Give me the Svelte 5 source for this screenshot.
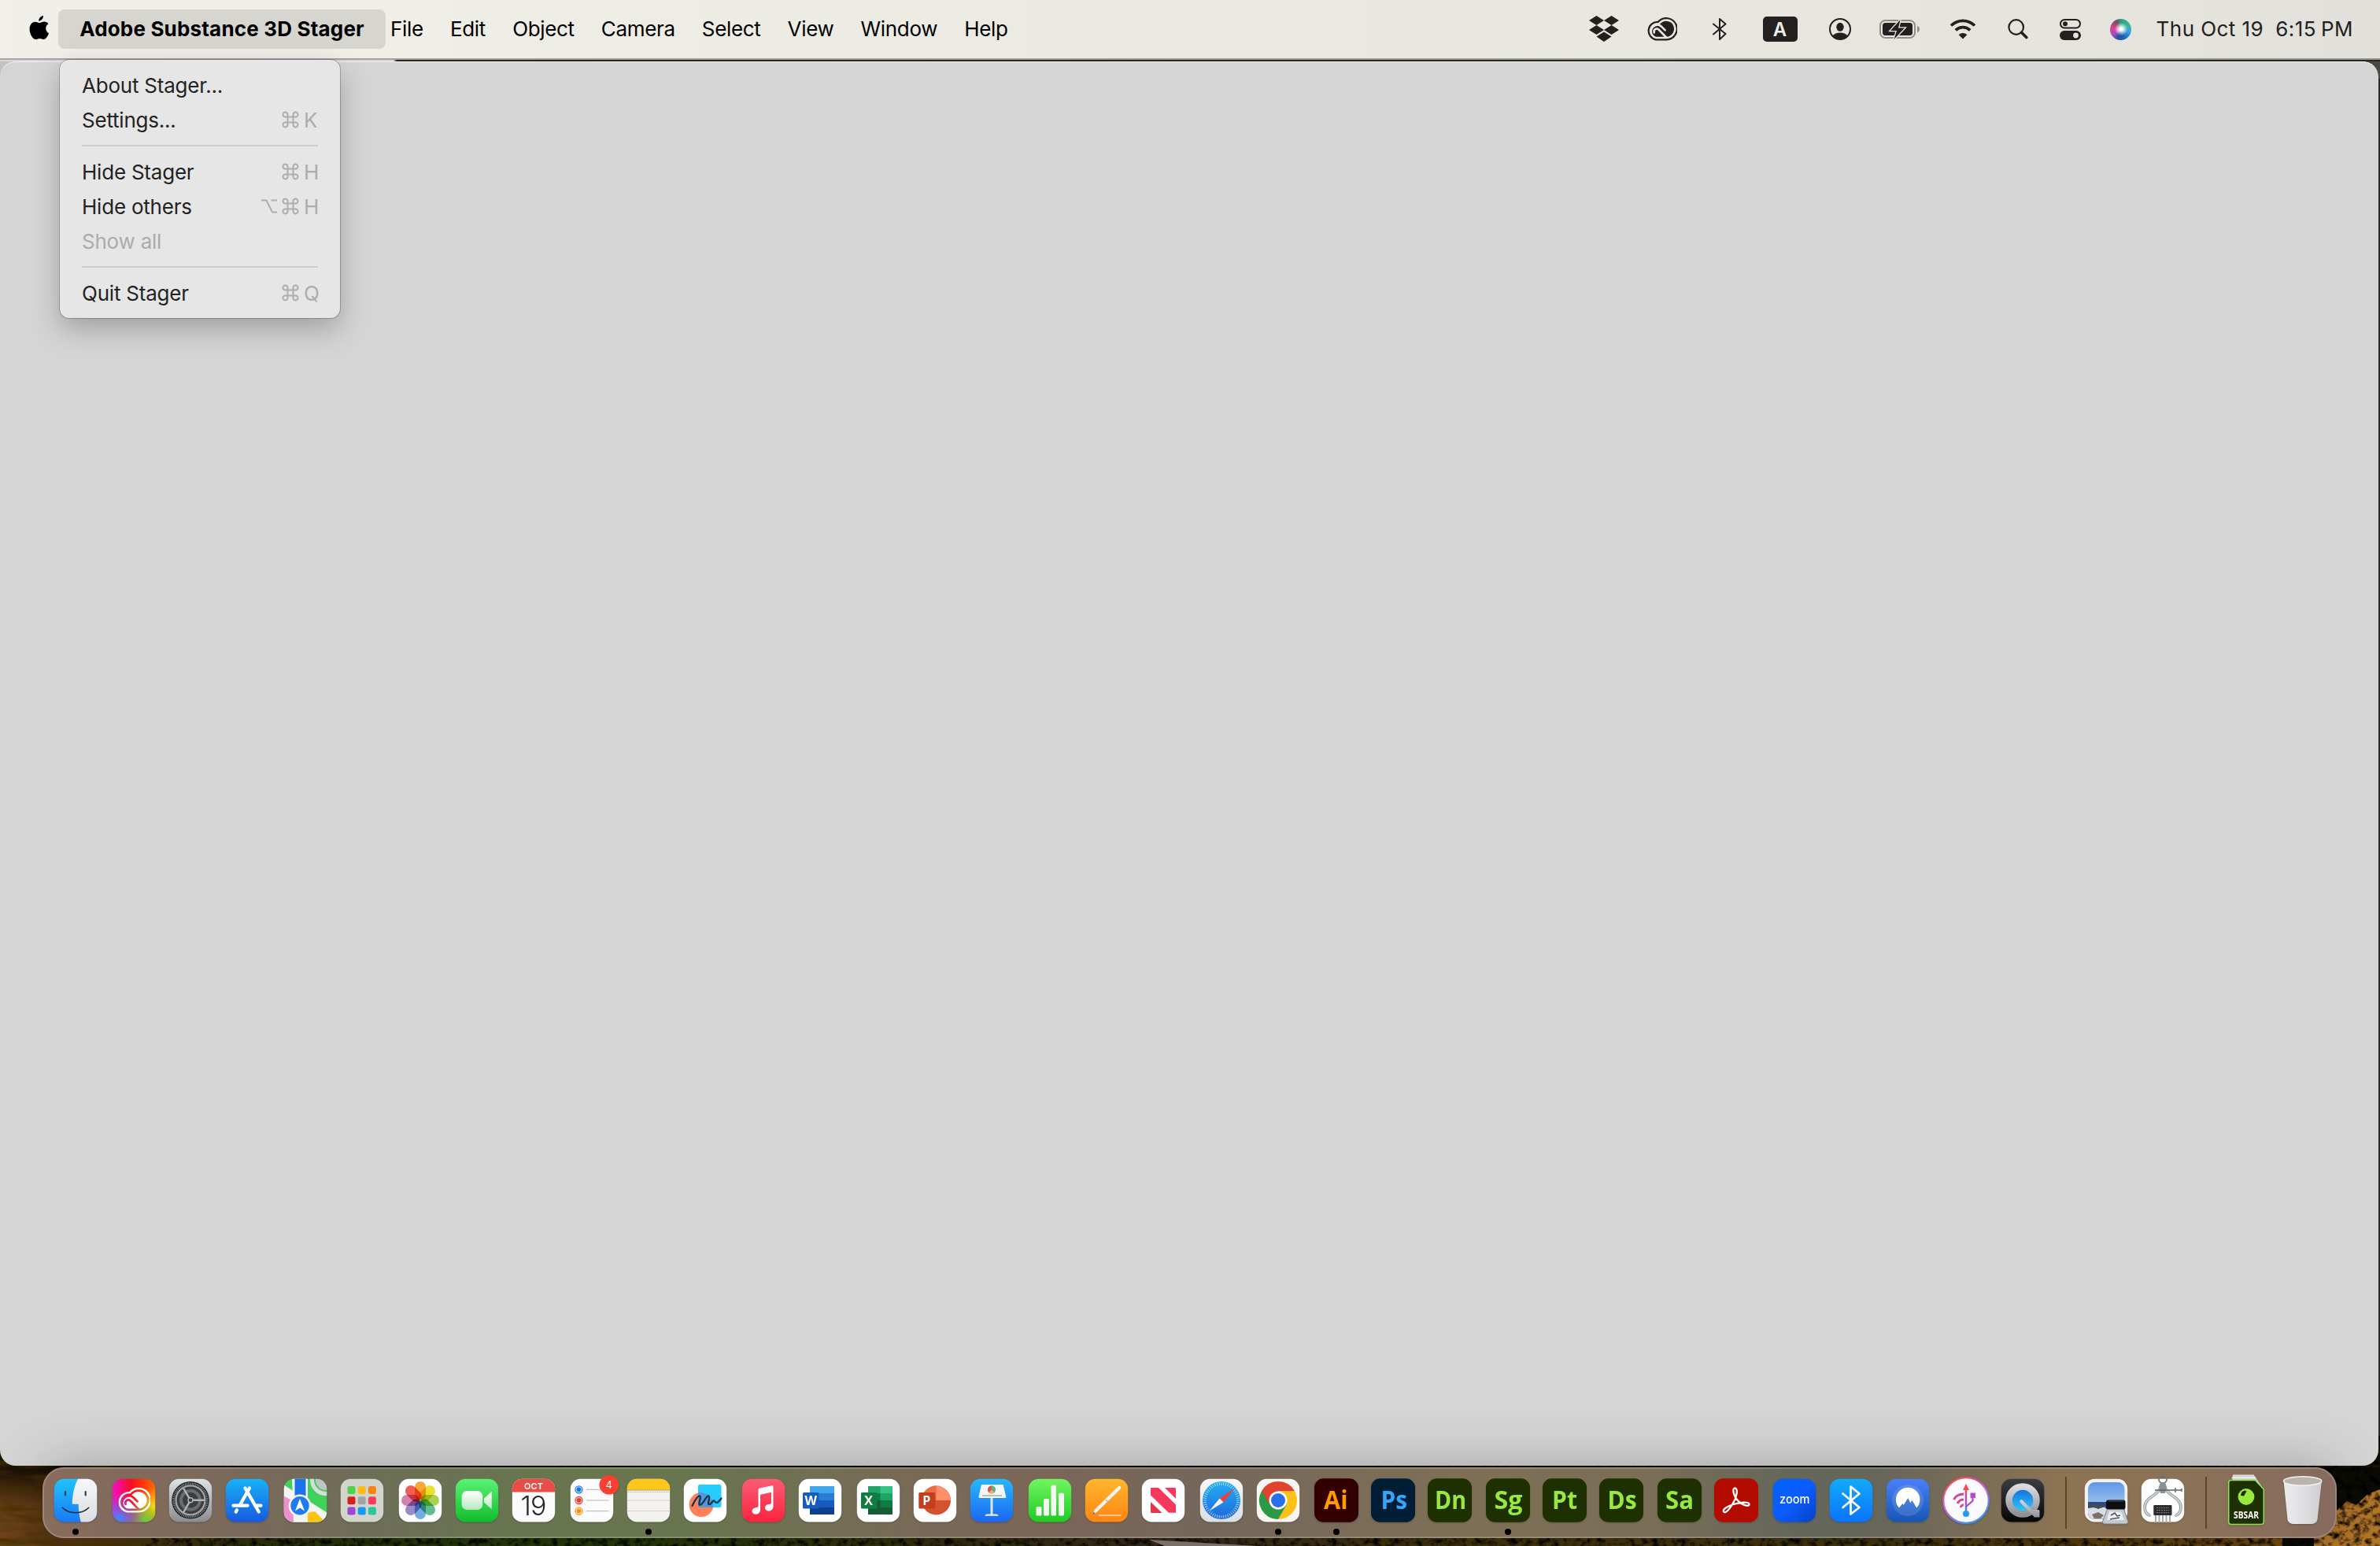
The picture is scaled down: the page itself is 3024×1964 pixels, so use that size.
<script>
	const menus = ["File", "Edit", "Object", "Camera", "Select", "View", "Window", "Help"]

	const dropdown = [
		[
			{ label: "About Stager..." },
			{ label: "Settings...", key: "K" },
		],
		[
			{ label: "Hide Stager", key: "H" },
			{ label: "Hide others", key: "H", option: true },
			{ label: "Show all", disabled: true },
		],
		[
			{ label: "Quit Stager", key: "Q" },
		],
	]

	const adobeApps = [
		{ name: "Ai", x: 12, width: 30.5, fill: "#300", color: "#ff9a00", running: true },
		{ name: "Ps", x: 12.5, width: 33.5, fill: "#001e36", color: "#31a8ff" },
		{ name: "Dn", x: 9, width: 40, fill: "#1f3000", color: "#99e83f" },
		{ name: "Sg", x: 10.5, width: 36, fill: "#1f3000", color: "#99e83f", running: true, wide: true },
		{ name: "Pt", x: 12, width: 32, fill: "#1f3000", color: "#99e83f" },
		{ name: "Ds", x: 10.5, width: 37, fill: "#1f3000", color: "#99e83f" },
		{ name: "Sa", x: 10, width: 36, fill: "#1f3000", color: "#99e83f", wide: true },
	]

	const petals = ["#f79a1c", "#e8dc10", "#9ccb3b", "#4cb583", "#5aa3dc", "#8a7cc0", "#cc6fa6", "#f0463c"]

	const launchpad = [
		"#4fd24a", "#fdbc12", "#f7860f",
		"#d3201c", "#a0a5a6", "#fb3b5c",
		"#9a48cf", "#139bf5", "#2fc39a",
	]

	const ticks = Array.from({ length: 48 }, (_, i) => i * 7.5)
	const teeth = Array.from({ length: 60 }, (_, i) => i * 6)
</script>

{#snippet cloud(id)}
	<mask {id} maskUnits="userSpaceOnUse" x="-2" y="-2" width="44" height="34">
		<rect x="-2" y="-2" width="44" height="34" fill="#fff" />
		<g fill="none" stroke="#000" stroke-width="2.6">
			<path d="M9.800 19.500c-1.200-3.800 2.700-6.500 5.700-4L27.500 28" stroke-linecap="round" />
			<path d="M11 9.300c4-.8 6.500.8 8.700 3l4 4" stroke-linecap="round" />
		</g>
	</mask>
	<path d="M12 28.300h13A13.600 13.600 0 1 0 14.800 5.900A11.300 11.300 0 0 0 12 28.300z" fill="none" stroke="currentColor" stroke-width="2.200" />
	<path d="M12 24.700h13A10 10 0 1 0 16.500 9.500L14 11A7 7 0 0 0 12 24.700z" fill="currentColor" mask="url(#{id})" />
{/snippet}

{#snippet dot(running)}
	{#if running}<span class="dot"></span>{/if}
{/snippet}

<div class="desktop">
	<svg class="wallpaper" viewBox="0 0 3024 140" preserveAspectRatio="none">
		<defs>
			<linearGradient id="ground">
				<stop offset="0" stop-color="#7a4a1e" />
				<stop offset=".03" stop-color="#5e3a12" />
				<stop offset=".12" stop-color="#2c380e" />
				<stop offset=".25" stop-color="#2a430a" />
				<stop offset=".4" stop-color="#3a3411" />
				<stop offset=".5" stop-color="#40301c" />
				<stop offset=".62" stop-color="#4b3d0f" />
				<stop offset=".8" stop-color="#4b3b10" />
				<stop offset=".93" stop-color="#6e4b12" />
				<stop offset="1" stop-color="#9a6318" />
			</linearGradient>
			<linearGradient id="gloom" x2="0" y2="1">
				<stop offset="0" stop-color="#080502" stop-opacity=".95" />
				<stop offset=".32" stop-color="#080502" stop-opacity=".8" />
				<stop offset=".65" stop-color="#080502" stop-opacity=".1" />
			</linearGradient>
			<filter id="foliage" x="0" y="0" width="1" height="1">
				<feTurbulence type="fractalNoise" baseFrequency=".11 .13" numOctaves="4" seed="4" />
				<feColorMatrix values="0 0 0 0 0  0 0 0 0 0  0 0 0 0 0  0 2.6 0 0 -1.1" />
			</filter>
			<filter id="streaks" x="0" y="0" width="1" height="1">
				<feTurbulence type="fractalNoise" baseFrequency=".018 .1" numOctaves="3" seed="7" />
				<feColorMatrix values="0 0 0 0 .06  0 0 0 0 .03  0 0 0 0 0  0 2 0 0 -.75" />
			</filter>
		</defs>
		<rect width="3024" height="140" fill="url(#ground)" />
		<rect width="3024" height="140" fill="url(#gloom)" />
		<rect width="180" height="140" filter="url(#streaks)" />
		<path d="M2900 40h124v34l-60 26v40h-64z" fill="#0b0c04" />
		<path d="M2940 140v-36l28-8 14-13 12 5 14-14 16-6v72z" fill="#b3762a" />
		<rect x="180" width="2844" height="140" filter="url(#foliage)" />
		<path d="M1460 132L1600 140H1480z" fill="#8b7d76" />
	</svg>

	<header class="menubar">
		<svg class="apple" viewBox="0 0 26 31">
			<path d="M18 0c.3 3-2.500 6.500-5.700 6.700C11.900 3.600 14.900.5 18 0zM25 22.300c-1 2.900-3.600 7.700-6.200 7.800-2 .1-2.700-1.200-5.200-1.200-2.400 0-3.200 1.200-5.200 1.200C5 30.200.6 23.500.6 17 .6 11 4.300 7.800 8 7.800c2.300 0 3.800 1.400 5.400 1.400 1.500 0 3.300-1.600 6-1.600 2 0 3.900 1 5 2.700-4.600 2.700-3.900 9.700.6 12z" />
		</svg>
		<nav>
			<span class="app-name">Adobe Substance 3D Stager</span>
			{#each menus as menu}
				<span class="menu">{menu}</span>
			{/each}
		</nav>

		<div class="status">
			<svg class="dropbox" viewBox="0 0 38 34">
				<path d="M9.500 0L19 6 9.500 12 0 6zM28.500 0L38 6l-9.500 6L19 6zM0 18l9.500-6L19 18l-9.500 6zM28.500 12L38 18l-9.500 6L19 18zM9.500 26.500L19 20.500l9.500 6L19 33z" />
			</svg>
			<svg class="creative" viewBox="0 0 39 30">{@render cloud("cloudBar")}</svg>
			<svg class="bluetooth" viewBox="0 0 18 30">
				<path d="M1 8.500L16.500 21 9 28V2l7.500 6.500L1 21.500" fill="none" stroke="currentColor" stroke-width="2" stroke-linejoin="round" stroke-linecap="round" />
			</svg>
			<span class="input-source">A</span>
			<svg class="user" viewBox="0 0 28 28">
				<circle cx="14" cy="14" r="13" fill="none" stroke="currentColor" stroke-width="2" />
				<ellipse cx="14" cy="11.300" rx="4.700" ry="5.500" />
				<path d="M4.500 22.500C6.500 19.700 10 18.500 14 18.500s7.500 1.200 9.500 4C21 25.500 17.500 27 14 27s-7-1.500-9.500-4.500z" />
			</svg>
			<svg class="battery" viewBox="0 0 52 28">
				<rect x="1" y="3" width="44" height="22" rx="6.500" fill="none" stroke="#8e8d88" stroke-width="2" />
				<path d="M48 10v8c4-1 4-7 0-8z" fill="#8e8d88" />
				<rect x="4" y="6" width="38" height="16" rx="3.500" />
				<path d="M26.500 2L14 16h8l-3.500 11L32 12.500h-8z" stroke="#e7e6df" stroke-width="2.600" />
				<path d="M26.500 2L14 16h8l-3.500 11L32 12.500h-8z" />
			</svg>
			<svg class="wifi" viewBox="0 0 34 26">
				<path d="M2 8.500C10.500.3 23.500.3 32 8.500M7.800 14.300c5.400-5 13-5 18.400 0" fill="none" stroke="currentColor" stroke-width="3.800" />
				<path d="M17 25.500l-5.300-5.300c3-2.800 7.600-2.800 10.600 0z" />
			</svg>
			<svg class="search" viewBox="0 0 26 26">
				<circle cx="10.700" cy="10.500" r="9.300" fill="none" stroke="currentColor" stroke-width="2.200" />
				<path d="M17.500 17.300l6.300 6.200" stroke="currentColor" stroke-width="3.600" stroke-linecap="round" />
			</svg>
			<svg class="controls" viewBox="0 0 27 27">
				<rect x="1" y="1" width="25" height="10.500" rx="5.250" fill="none" stroke="currentColor" stroke-width="2" />
				<circle cx="7" cy="6.300" r="3" />
				<rect y="15" width="27" height="12" rx="6" />
				<circle cx="20.500" cy="21" r="3.400" fill="#e6e5de" />
			</svg>
			<span class="siri"></span>
			<span class="clock"><span>Thu Oct 19</span><span>6:15</span><span>PM</span></span>
		</div>
	</header>
	<div class="seam"></div>

	<main class="window"></main>

	<ul class="dropdown">
		{#each dropdown as group, i}
			{#if i > 0}<li class="rule"></li>{/if}
			{#each group as item}
				<li class={{ entry: true, disabled: item.disabled }}>
					<span>{item.label}</span>
					{#if item.key}
						<span class="shortcut">
							{#if item.option}
								<svg viewBox="0 0 22 22"><path d="M1 3.500h6.500l7.500 15h6M13.500 3.500H21" /></svg>
							{/if}
							<svg viewBox="0 0 22 22"><path d="M7.500 7.500h7v7h-7zM7.500 7.500H5a3 3 0 1 1 2.500-2.800zM14.500 7.500V4.700a3 3 0 1 1 2.500 2.800zM7.500 14.500v2.800A3 3 0 1 1 5 14.500zM14.500 14.500H17a3 3 0 1 1-2.500 2.800z" /></svg>
							<kbd>{item.key}</kbd>
						</span>
					{/if}
				</li>
			{/each}
		{/each}
	</ul>

	<footer class="dock">
		<svg class="defs" width="0" height="0">
			<defs>
				<clipPath id="tile"><rect x=".8" y=".8" width="54.400" height="54.600" rx="12.500" /></clipPath>
				<linearGradient id="finderBlue" x2="0" y2="1"><stop stop-color="#1fc4fb" /><stop offset="1" stop-color="#1b78f4" /></linearGradient>
				<linearGradient id="paper" x2="0" y2="1"><stop stop-color="#f7f8fa" /><stop offset="1" stop-color="#dcdde2" /></linearGradient>
				<linearGradient id="rainbow"><stop stop-color="#f30fd0" /><stop offset=".45" stop-color="#fb0d1b" /><stop offset="1" stop-color="#ff6a00" /></linearGradient>
				<radialGradient id="spotYellow"><stop stop-color="#ffe21a" /><stop offset="1" stop-color="#ffb900" stop-opacity="0" /></radialGradient>
				<radialGradient id="spotGreen"><stop stop-color="#4fdc46" /><stop offset="1" stop-color="#7be03a" stop-opacity="0" /></radialGradient>
				<radialGradient id="spotBlue"><stop stop-color="#3a8dff" /><stop offset="1" stop-color="#7a5bff" stop-opacity="0" /></radialGradient>
				<linearGradient id="steel" x2="0" y2="1"><stop stop-color="#dbe5e8" /><stop offset="1" stop-color="#8c8c8e" /></linearGradient>
				<linearGradient id="storeBlue" x2="0" y2="1"><stop stop-color="#17b3f9" /><stop offset="1" stop-color="#1759dd" /></linearGradient>
				<linearGradient id="green" x2="0" y2="1"><stop stop-color="#5bf373" /><stop offset="1" stop-color="#10bd2e" /></linearGradient>
				<linearGradient id="camera" x2="0" y2="1"><stop stop-color="#fff" /><stop offset="1" stop-color="#b8e8bd" /></linearGradient>
				<linearGradient id="red" x2="0" y2="1"><stop stop-color="#fb5c74" /><stop offset="1" stop-color="#fb2340" /></linearGradient>
				<linearGradient id="keynote" x2="0" y2="1"><stop stop-color="#26b9fd" /><stop offset="1" stop-color="#1c66f0" /></linearGradient>
				<linearGradient id="numbers" x2="0" y2="1"><stop stop-color="#72f562" /><stop offset="1" stop-color="#1dcb22" /></linearGradient>
				<linearGradient id="pages" x2="0" y2="1"><stop stop-color="#ffb72e" /><stop offset="1" stop-color="#fe8414" /></linearGradient>
				<linearGradient id="compass" x2="0" y2="1"><stop stop-color="#22b0f2" /><stop offset="1" stop-color="#2068dd" /></linearGradient>
				<linearGradient id="zoomBlue" x2="1" y2="1"><stop stop-color="#0062fb" /><stop offset=".5" stop-color="#0b5cff" /><stop offset="1" stop-color="#0743c5" /></linearGradient>
				<linearGradient id="toothBlue" x2="0" y2="1"><stop stop-color="#12abfb" /><stop offset="1" stop-color="#0a72fb" /></linearGradient>
				<linearGradient id="nord" x2="0" y2="1"><stop stop-color="#4a80fa" /><stop offset="1" stop-color="#1555b4" /></linearGradient>
				<linearGradient id="ring" x1=".2" x2=".8" y2="1"><stop stop-color="#fb4a3e" /><stop offset=".45" stop-color="#d35be0" /><stop offset="1" stop-color="#1fa0f2" /></linearGradient>
				<linearGradient id="usb" x2="0" y2="1"><stop stop-color="#f9474f" /><stop offset=".5" stop-color="#b44bd6" /><stop offset="1" stop-color="#1f9df2" /></linearGradient>
				<linearGradient id="night" x2="0" y2="1"><stop stop-color="#3b3d42" /><stop offset="1" stop-color="#060607" /></linearGradient>
				<linearGradient id="silver" x2="0" y2="1"><stop stop-color="#d9dadd" /><stop offset="1" stop-color="#909197" /></linearGradient>
				<linearGradient id="cyan" x2="0" y2="1"><stop stop-color="#1067de" /><stop offset="1" stop-color="#33d3fb" /></linearGradient>
				<linearGradient id="sky" x2="0" y2="1"><stop stop-color="#5f97e6" /><stop offset="1" stop-color="#c4dcf6" /></linearGradient>
				<linearGradient id="bin"><stop stop-color="#e9eaec" /><stop offset=".3" stop-color="#e6e6e8" /><stop offset="1" stop-color="#cfcdd0" /></linearGradient>
			</defs>
		</svg>

		<!-- Finder -->
		<div class="app">
			<svg viewBox="0 0 56 56"><g clip-path="url(#tile)">
				<rect width="56" height="56" fill="url(#finderBlue)" />
				<path d="M31.500 0C26.500 9 24 20 23.700 32.700h8c0 8 1 15 3.200 23.300H56V0z" fill="url(#paper)" />
				<path d="M15 17v4.500M40.700 17v4.500" stroke="#25435c" stroke-width="2.200" stroke-linecap="round" />
				<path d="M11.300 37.200c8.500 8.600 25 8.600 33.500 0" fill="none" stroke="#14283a" stroke-width="1.500" stroke-linecap="round" />
			</g></svg>
			{@render dot(true)}
		</div>
		<!-- Creative Cloud -->
		<div class="app wide">
			<svg viewBox="0 0 56 56"><g clip-path="url(#tile)">
				<rect width="56" height="56" fill="url(#rainbow)" />
				<circle cx="54" cy="36" r="26" fill="url(#spotYellow)" />
				<circle cx="42" cy="56" r="28" fill="url(#spotGreen)" />
				<circle cx="10" cy="52" r="32" fill="url(#spotBlue)" />
			</g>
			<svg x="7" y="11.500" width="42" height="33" viewBox="0 0 39 30" color="#fff">{@render cloud("cloudDock")}</svg></svg>
		</div>
		<!-- System Settings -->
		<div class="app">
			<svg viewBox="0 0 56 56"><g clip-path="url(#tile)">
				<rect width="56" height="56" fill="url(#steel)" />
				<circle cx="28" cy="27.800" r="23.800" fill="#232426" />
				<g stroke="#9a9b9d" stroke-width="1">
					{#each teeth as angle}
						<path d="M28 5.300v2.500" transform="rotate({angle} 28 27.800)" />
					{/each}
				</g>
				<circle cx="28" cy="27.800" r="18.500" fill="#3c3d3f" stroke="#a4a5a7" stroke-width="2.200" />
				<circle cx="28" cy="27.800" r="12" fill="none" stroke="#6b6c6e" stroke-width="4" />
				<path d="M28 27.800L19 12.500M28 27.800h18M28 27.800L19 43.500" stroke="#b4b5b7" stroke-width="2.400" />
				<circle cx="28" cy="27.800" r="3" fill="#3c3d3f" stroke="#b4b5b7" stroke-width="1.400" />
			</g></svg>
		</div>
		<!-- App Store -->
		<div class="app">
			<svg viewBox="0 0 56 56"><g clip-path="url(#tile)">
				<rect width="56" height="56" fill="url(#storeBlue)" />
				<path d="M31 12.500L18.800 34M15 40.300l-1.300 2.300M25.500 12.500l17.300 30M10.500 34.700h18M38 34.700h7.500" stroke="#fff" stroke-width="4.200" stroke-linecap="round" />
			</g></svg>
		</div>
		<!-- Maps -->
		<div class="app wide">
			<svg viewBox="0 0 56 56"><g clip-path="url(#tile)">
				<rect width="56" height="56" fill="#3fd158" />
				<path d="M0 8L56 44v12H0z" fill="#f4f4f4" />
				<path d="M0 22l14 8v26H0z" fill="#ef8fd0" />
				<path d="M30 56V44l10-2 14 14z" fill="#fdc310" />
				<path d="M11 0h20v56H13z" fill="#f4f4f4" />
				<path d="M14.500 0h14v28h-14z" fill="#1a73e8" />
				<circle cx="54" cy="2" r="17.500" fill="none" stroke="#d9dade" stroke-width="5" />
				<circle cx="54" cy="2" r="13" fill="#bfc3c8" />
				<circle cx="21" cy="34.800" r="13" fill="#1f7cf0" stroke="#f3f3f5" stroke-width="2.600" />
				<path d="M21 26l6 15.500-6-4-6 4z" fill="#fff" />
			</g></svg>
		</div>
		<!-- Launchpad -->
		<div class="app">
			<svg viewBox="0 0 56 56"><g clip-path="url(#tile)">
				<rect width="56" height="56" fill="#d3d4cc" />
				{#each launchpad as fill, i}
					<rect x={9.5 + (i % 3) * 13.2} y={10 + Math.floor(i / 3) * 13.3} width="10" height="10" rx="2.400" {fill} />
				{/each}
			</g></svg>
		</div>
		<!-- Photos -->
		<div class="app wide">
			<svg viewBox="0 0 56 56"><g clip-path="url(#tile)">
				<rect width="56" height="56" fill="#fff" />
				<g class="petals">
					{#each petals as fill, i}
						<rect x="21" y="4" width="14" height="23.500" rx="7" {fill} transform="rotate({i * 45} 28 28)" />
					{/each}
				</g>
			</g></svg>
		</div>
		<!-- FaceTime -->
		<div class="app">
			<svg viewBox="0 0 56 56"><g clip-path="url(#tile)">
				<rect width="56" height="56" fill="url(#green)" />
				<rect x="8.700" y="16" width="26.500" height="24" rx="6.500" fill="url(#camera)" />
				<path d="M37 25.500l9-8.300c.4-.3.800-.1.800.5v20.500c0 .6-.4.800-.8.500l-9-8.300z" fill="url(#camera)" />
			</g></svg>
		</div>
		<!-- Calendar -->
		<div class="app">
			<svg viewBox="0 0 56 56"><g clip-path="url(#tile)">
				<rect width="56" height="56" fill="#fbfbfb" />
				<rect width="56" height="17.500" fill="#ea4d47" />
				<text x="28" y="14" class="month">OCT</text>
				<text x="27.500" y="46.800" class="day">19</text>
			</g></svg>
		</div>
		<!-- Reminders -->
		<div class="app wide">
			<svg viewBox="0 0 56 56">
				<g clip-path="url(#tile)">
					<rect width="56" height="56" fill="#fcfcfc" />
					<g fill="none" stroke-width="1.300">
						<circle cx="11.500" cy="14.300" r="4.500" stroke="#1078f5" /><circle cx="11.500" cy="28" r="4.500" stroke="#f03b31" /><circle cx="11.500" cy="41.600" r="4.500" stroke="#f7930f" />
					</g>
					<circle cx="11.500" cy="14.300" r="3" fill="#1078f5" /><circle cx="11.500" cy="28" r="3" fill="#f03b31" /><circle cx="11.500" cy="41.600" r="3" fill="#f7930f" />
					<path d="M21 14.300h28.500M21 28h28.500M21 41.600h28.500" stroke="#b4b4b8" stroke-width="1" />
				</g>
				<circle cx="49.800" cy="8.300" r="12.300" fill="#fb3f33" />
				<text x="49.800" y="12.500" class="badge">4</text>
			</svg>
		</div>
		<!-- Notes -->
		<div class="app">
			<svg viewBox="0 0 56 56"><g clip-path="url(#tile)">
				<rect width="56" height="56" fill="#f3f2ee" />
				<rect width="56" height="14.500" fill="#fdc71c" />
				<path d="M0 15h56" stroke="#b9962f" />
				<path d="M2 17.500h52" stroke="#a9a9a6" stroke-dasharray="1 1.300" />
				<path d="M0 28h56M0 41.500h56" stroke="#d5d4d0" />
			</g></svg>
			{@render dot(true)}
		</div>
		<!-- Freeform -->
		<div class="app">
			<svg viewBox="0 0 56 56"><g clip-path="url(#tile)">
				<rect width="56" height="56" fill="#fff" />
				<circle cx="23" cy="33.500" r="15.500" fill="#ff8059" />
				<rect x="19" y="8" width="29.500" height="29" rx="2.500" fill="#26cdfb" />
				<path d="M19 18.500a15.500 15.500 0 0 1 18.500 18.500H21.500a2.500 2.500 0 0 1-2.500-2.500z" fill="#5797d8" />
				<path d="M11.500 35c3-6 7-13 9.500-12.500 3 .7-3 11.500.5 11.200 4-.3 8-12.500 11-11.200 2.500 1.200-2.500 10.500.5 10.700 3 .2 4-5 6-4.700 1.700.3 1.500 3 4 2.300 2-.6 3.500-2.800 5.500-5.300" fill="none" stroke="#0d3654" stroke-width="2.300" stroke-linecap="round" />
			</g></svg>
		</div>
		<!-- Music -->
		<div class="app wide">
			<svg viewBox="0 0 56 56"><g clip-path="url(#tile)">
				<rect width="56" height="56" fill="url(#red)" />
				<path d="M21.500 14.500c0-1.200.6-1.800 1.800-2.100l15.600-3.200c1.100-.2 1.600.2 1.600 1.300v25c0 3.400-2.400 6-5.800 6-2.800 0-4.700-1.500-4.700-3.900 0-2.500 1.900-4 4.600-4.500l2-.4c1-.2 1.400-.7 1.400-1.700V17.800l-14 2.900v19c0 3.300-2.300 5.900-5.700 5.900-2.800 0-4.800-1.500-4.800-3.900 0-2.500 2-4 4.600-4.500l2-.4c1-.2 1.400-.7 1.400-1.700z" fill="#fff" />
			</g></svg>
		</div>
		<!-- Word -->
		<div class="app">
			<svg viewBox="0 0 56 56"><g clip-path="url(#tile)">
				<rect width="56" height="56" fill="#fff" />
				<path d="M15 10h31v9H15z" fill="#41a5ee" /><path d="M15 19h31v9H15z" fill="#2b7cd3" /><path d="M15 28h31v9H15z" fill="#185abd" /><path d="M15 37h31v9H15z" fill="#103f91" />
				<rect x="6" y="18" width="20.500" height="20.500" rx="1.500" fill="#185abd" />
				<text x="16.200" y="33.700" class="office">W</text>
			</g></svg>
		</div>
		<!-- Excel -->
		<div class="app wide">
			<svg viewBox="0 0 56 56"><g clip-path="url(#tile)">
				<rect width="56" height="56" fill="#fff" />
				<path d="M15 10h16v9H15z" fill="#21a366" /><path d="M30.500 10H46v9H30.500z" fill="#33c481" />
				<path d="M15 19h16v9H15z" fill="#107c41" /><path d="M30.500 19H46v9H30.500z" fill="#21a366" />
				<path d="M15 28h16v18H15z" fill="#185c37" /><path d="M30.500 28H46v9H30.500z" fill="#107c41" /><path d="M30.500 37H46v9H30.500z" fill="#185c37" />
				<rect x="6" y="18" width="20.500" height="20.500" rx="1.500" fill="#107c41" />
				<text x="15.700" y="33.700" class="office">X</text>
			</g></svg>
		</div>
		<!-- PowerPoint -->
		<div class="app">
			<svg viewBox="0 0 56 56"><g clip-path="url(#tile)">
				<rect width="56" height="56" fill="#fff" />
				<circle cx="29.500" cy="28" r="18.500" fill="#d35230" />
				<path d="M29.500 9.500V28H11a18.500 18.500 0 0 1 18.500-18.500z" fill="#ed6c47" />
				<path d="M29.500 9.500A18.500 18.500 0 0 1 48 28H29.500z" fill="#ff8f6b" />
				<rect x="7.300" y="18" width="21" height="20.500" rx="1.500" fill="#c43e1c" />
				<text x="17.200" y="33.700" class="office">P</text>
			</g></svg>
		</div>
		<!-- Keynote -->
		<div class="app">
			<svg viewBox="0 0 56 56"><g clip-path="url(#tile)">
				<rect width="56" height="56" fill="url(#keynote)" />
				<path d="M15 8h27.500l3.800 15.500c0 1-.5 1.500-1.500 1.500H13c-1 0-1.500-.5-1.500-1.500z" fill="#f6f6f8" />
				<path d="M16 22h25" stroke="#a9abb0" stroke-width="1.600" />
				<circle cx="28" cy="14.500" r="5" fill="#4aa3e8" /><path d="M28 14.500v-5a5 5 0 0 1 5 5z" fill="#5cc05a" /><path d="M28 14.500l-3.500 3.500A5 5 0 0 1 28 9.500z" fill="#e2504f" /><path d="M28 14.500l3.500 3.500a5 5 0 0 1-7 0z" fill="#f3b63b" />
				<path d="M28 25v21" stroke="#dfe6f0" stroke-width="3" /><path d="M19.500 47.800c0-2 2-2.300 4-2.300h9c2 0 4 .3 4 2.300z" fill="#e8ebf1" />
			</g></svg>
		</div>
		<!-- Numbers -->
		<div class="app wide">
			<svg viewBox="0 0 56 56"><g clip-path="url(#tile)">
				<rect width="56" height="56" fill="url(#numbers)" />
				<g fill="#f2f7f1"><rect x="10.500" y="36" width="7" height="11.500" rx="1.500" /><rect x="20" y="26" width="7" height="21.500" rx="1.500" /><rect x="29.500" y="8.500" width="6.500" height="39" rx="1.500" /><rect x="39" y="18.700" width="7" height="28.800" rx="1.500" /></g>
			</g></svg>
		</div>
		<!-- Pages -->
		<div class="app">
			<svg viewBox="0 0 56 56"><g clip-path="url(#tile)">
				<rect width="56" height="56" fill="url(#pages)" />
				<path d="M18 47h28.500" stroke="#ffd9ae" stroke-width="1.600" />
				<path d="M9.500 46.500l3-6.500L42 11c2-1.800 3.500-1.500 4-.8s.5 2-1 4L15.500 43z" fill="#f5f3f0" />
				<path d="M9.500 46.500l2-4 2 2z" fill="#776a5e" /><path d="M27 27l3 3" stroke="#b9b3aa" stroke-width="1.500" />
			</g></svg>
		</div>
		<!-- News -->
		<div class="app">
			<svg viewBox="0 0 56 56"><g clip-path="url(#tile)">
				<rect width="56" height="56" fill="#fff" />
				<path d="M12 12h10l22 21.500v10.200H35L12 21.500z" fill="#f7375c" /><path d="M30 12h12.500c1 0 1.500.5 1.500 1.500v12.200z" fill="#f7375c" /><path d="M12 30v12.500c0 1 .5 1.500 1.500 1.500h13z" fill="#e8334f" />
			</g></svg>
		</div>
		<!-- Safari -->
		<div class="app wide">
			<svg viewBox="0 0 56 56"><g clip-path="url(#tile)">
				<rect width="56" height="56" fill="url(#paper)" />
				<circle cx="28" cy="28" r="24" fill="url(#compass)" />
				<g stroke="#bfe6fb" stroke-width=".8">
					{#each ticks as angle}
						<path d="M28 5v3.800" transform="rotate({angle} 28 28)" />
					{/each}
				</g>
				<path d="M44.500 12.500L30.500 30.500 25.500 25.500z" fill="#f1403c" /><path d="M12.500 41.500l13-16 5 5z" fill="#f1f3f5" />
			</g></svg>
		</div>
		<!-- Chrome -->
		<div class="app">
			<svg viewBox="0 0 56 56"><g clip-path="url(#tile)">
				<rect width="56" height="56" fill="#f7f6f4" />
				<circle cx="28" cy="28" r="24" fill="#fdc016" />
				<path d="M28 28L7.200 16A24 24 0 0 0 28 52l10.400-18z" fill="#2a9a48" />
				<path d="M28 16h20.800A24 24 0 0 0 7.200 16l10.400 18L28 28z" fill="#e04330" />
				<circle cx="28" cy="28" r="11.500" fill="#fff" /><circle cx="28" cy="28" r="9" fill="#2a6fea" />
			</g></svg>
			{@render dot(true)}
		</div>
		{#each adobeApps as app, i}
			<div class={{ app: true, wide: i === 0 || app.wide }}>
				<svg viewBox="0 0 56 56">
					<rect y=".3" width="56" height="55.400" rx="11.500" fill={app.fill} />
					<text x={app.x} y="39.300" class="adobe" fill={app.color} textLength={app.width} lengthAdjust="spacingAndGlyphs">{app.name}</text>
				</svg>
				{@render dot(app.running)}
			</div>
		{/each}
		<!-- Acrobat -->
		<div class="app">
			<svg viewBox="0 0 56 56">
				<rect y=".3" width="56" height="55.400" rx="11.500" fill="#b30b00" />
				<path d="M26.500 12.500c4.500.5 2 12.500-3 20-4 6.500-8.500 12-11 10.200-3-2.700 4-7.200 12-9.700 8-2.400 19.500-3.500 20-.2.300 3.700-8.500 2-14-4-5.500-5.500-8.500-16.500-4-16.300z" fill="none" stroke="#fff" stroke-width="2.300" stroke-linejoin="round" />
			</svg>
		</div>
		<!-- Zoom -->
		<div class="app wide">
			<svg viewBox="0 0 56 56"><g clip-path="url(#tile)">
				<rect width="56" height="56" fill="url(#zoomBlue)" />
				<text x="9" y="32" class="zoom" textLength="38.500" lengthAdjust="spacingAndGlyphs">zoom</text>
			</g></svg>
		</div>
		<!-- Bluetooth -->
		<div class="app">
			<svg viewBox="0 0 56 56"><g clip-path="url(#tile)">
				<rect width="56" height="56" fill="url(#toothBlue)" />
				<path d="M17.500 19.500L38.500 37 27.500 45.500V10.500l11 9L17.500 37" fill="none" stroke="#fff" stroke-width="2.700" stroke-linejoin="round" stroke-linecap="round" />
			</g></svg>
		</div>
		<!-- NordVPN -->
		<div class="app">
			<svg viewBox="0 0 56 56"><g clip-path="url(#tile)">
				<rect width="56" height="56" fill="url(#nord)" />
				<circle cx="28" cy="28" r="20" fill="#fff" fill-opacity=".13" />
				<path d="M17 37.500a15.300 15.300 0 1 1 22.300 0l-6-9.500-2 3.200-3.100-6.200-5.500 9-1.200-2z" fill="#fff" />
			</g></svg>
		</div>
		<!-- iMazing -->
		<div class="app wide">
			<svg viewBox="0 0 56 56">
				<circle cx="28" cy="28" r="28.800" fill="#fbfafc" stroke="url(#ring)" stroke-width="2.200" />
				<path d="M28 7l4 8h-8z" fill="#f9474f" />
				<path d="M26.800 14h2.400v32h-2.400z" fill="url(#usb)" /><circle cx="28" cy="45" r="4" fill="#1f9df2" />
				<path d="M28 36l8.500-7.500V22" fill="none" stroke="#a44bd8" stroke-width="2.200" /><rect x="33.500" y="18.500" width="6.500" height="6.500" fill="#b44bd6" />
				<path d="M12.500 27C15 22 20 20 25 20M17 32c1.500-3 4.500-5 8-5M21 37c.8-1.800 2-3 4-3.300" fill="none" stroke="#d3499a" stroke-width="2.800" />
			</svg>
		</div>
		<!-- QuickTime Player -->
		<div class="app">
			<svg viewBox="0 0 56 56"><g clip-path="url(#tile)">
				<rect width="56" height="56" fill="url(#night)" />
				<circle cx="28" cy="28" r="17.500" fill="url(#cyan)" stroke="url(#silver)" stroke-width="8.500" />
				<path d="M28 28l12 12h7.500c1.500 0 2 .5 2 2v7.500H43L25 31c-2-2.500 1-5 3-3z" fill="url(#silver)" />
			</g></svg>
		</div>

		<div class="divider"></div>
		<!-- Preview -->
		<div class="app after">
			<svg viewBox="0 0 56 56">
				<rect x=".8" y=".8" width="54.400" height="54.600" rx="12.500" fill="#f3f1ee" />
				<rect x="5" y="5" width="46.500" height="46.500" rx="8.500" fill="url(#sky)" />
				<path d="M5 30h46.500v13c0 6-3 8.500-8.500 8.500H13c-5 0-8-2.500-8-8.500z" fill="#2b4a7d" />
				<path d="M5 38l8-1 5 2 7-3 5 4v11.500H13c-5 0-8-3.500-8-8z" fill="#d6dde4" />
				<path d="M5 35l8-2 5 2 7-1v3l-9 1z" fill="#4a4c52" /><path d="M10 46l8-3 7 4-4 4h-8z" fill="#7b7062" />
				<path d="M30 38h20l6 17c0 2.500-2 3-4 3H27c-2.500 0-4-1-3.500-3z" fill="#c4c9cd" stroke="#7b7f85" />
				<path d="M32 42l-3 11h22l-4-10z" fill="#eceff1" /><path d="M34 47l5-3 3 4 4-1M33 52l12-2" stroke="#50545a" stroke-width="1.500" fill="none" />
				<rect x="28" y="27.500" width="24.500" height="12" rx="3" fill="#0d0d0f" /><path d="M30.500 29h19.500" stroke="#4b4b50" stroke-width="1.200" />
			</svg>
		</div>
		<!-- System Information -->
		<div class="app">
			<svg viewBox="0 0 56 56">
				<rect x=".8" y=".8" width="54.400" height="54.600" rx="12.500" fill="#fdfdfd" />
				<circle cx="28" cy="1" r="5.200" fill="none" stroke="#74797a" stroke-width="1.800" />
				<g fill="none" stroke-linecap="round">
					<path d="M25 12C22 22 5 24 5 37c0 5 2 8 6 10M31 12c3 10 20 12 20 25 0 5-2 8-6 10" stroke="#858b8c" stroke-width="3.600" />
					<path d="M25 12C22 22 5 24 5 37c0 5 2 8 6 10M31 12c3 10 20 12 20 25 0 5-2 8-6 10" stroke="#cfd4d4" stroke-width="2" />
				</g>
				<path d="M25 5h6l2 6-2 8h-6l-2-8z" fill="#8b9192" />
				<path d="M18 15h34M44 12v6M52 13v4" stroke="#5e6364" stroke-width="1.400" />
				<rect x="16.300" y="34" width="23.200" height="13" rx="1" fill="#2c2d30" /><path d="M20 37.500h16M20 40.500h16M20 43.500h16" stroke="#86878a" stroke-width=".8" stroke-dasharray="2 1" />
				<path d="M19 47v9.500M23.500 47v9.500M28 47v9.500M32.500 47v9.500M37 47v9.500" stroke="#a9abad" stroke-width="2" />
			</svg>
		</div>

		<div class="divider"></div>
		<!-- SBSAR file -->
		<div class="app after">
			<svg viewBox="0 0 56 56">
				<path d="M11-4h27l9 13v8H9z" fill="#c9cacb" /><path d="M11-4h27M10-1.500h30M9.500 0h31" stroke="#f3f3f3" />
				<path d="M8.500 2.500h31L50.300 14v41c0 2-1.300 3.500-3.300 3.500H9c-2 0-3.300-1.500-3.300-3.500V5.500c0-2 1-3 2.800-3z" fill="#1f3000" stroke="#8fe04a" stroke-width="1.600" />
				<circle cx="28" cy="23.500" r="10.400" fill="#99e83f" /><path d="M21 22c.5-4 2-6 5-6.500l2.500 1-3.500 6z" fill="#1f3000" />
				<text x="12" y="51" class="sbsar" textLength="32" lengthAdjust="spacingAndGlyphs">SBSAR</text>
			</svg>
		</div>
		<!-- Trash -->
		<div class="app">
			<svg viewBox="0 0 56 56">
				<path d="M3.500 3l5 49c.5 4 4 6 9 6h20c5 0 8.500-2 9-6l5.500-49z" fill="url(#bin)" />
				<ellipse cx="27.700" cy="3.500" rx="24.200" ry="5.700" fill="#bdb3ad" stroke="#f3f3f4" stroke-width="1.400" />
			</svg>
		</div>
	</footer>
</div>

<style>
	:global(body) {
		overflow: hidden;
	}

	.desktop {
		position: relative;
		display: flex;
		flex-direction: column;
		width: 3024px;
		height: 1964px;
		overflow: hidden;
		background: linear-gradient(90deg, #c4c2bf 500px, #4a4843 504px) 0 0 / 100% 100px no-repeat, #2a2b29;
		color: #000;
		font-family: Inter, "Liberation Sans", sans-serif;
		font-size: 26px;
	}

	.wallpaper {
		position: absolute;
		left: 0;
		bottom: 0;
		width: 3024px;
		height: 140px;
	}

	.menubar {
		display: flex;
		align-items: center;
		flex: none;
		height: 74px;
		background: linear-gradient(90deg, #f1efea, #eeede5 25%, #e8e7e0 65%, #e5e4dc 90%, #e2e0db);
	}

	.apple {
		width: 26px;
		height: 31px;
		margin: 0 11px 4px 37px;
	}

	nav {
		display: flex;
		align-items: center;
		letter-spacing: -0.35px;
	}

	.app-name {
		width: 416px;
		height: 50px;
		margin-right: -11px;
		border-radius: 8px;
		background: #d6d5cf;
		font-weight: 700;
		line-height: 49px;
		text-align: center;
		letter-spacing: 0.18px;
	}

	.menu {
		padding: 0 17.1px 1px;
	}

	.status {
		display: flex;
		align-items: center;
		margin-left: auto;
		padding-right: 34px;
		color: #22211f;
		fill: #22211f;
	}

	.dropbox { width: 38px; height: 34px; margin-right: 35px; }
	.creative { width: 39px; height: 30px; margin-right: 45px; }
	.bluetooth { width: 18px; height: 30px; margin-right: 46px; }
	.user { width: 28px; height: 28px; margin-right: 36px; }
	.battery { width: 52px; height: 28px; margin-right: 37px; }
	.wifi { width: 34px; height: 26px; margin-right: 40px; }
	.search { width: 26px; height: 26px; margin-right: 40px; }
	.controls { width: 27px; height: 27px; margin-right: 37px; }

	.input-source {
		width: 44px;
		height: 32px;
		margin-right: 40px;
		border-radius: 5px;
		background: #22211f;
		color: #efeee9;
		font-size: 24px;
		font-weight: 600;
		line-height: 33px;
		text-align: center;
	}

	.siri {
		width: 27px;
		height: 27px;
		margin-right: 32px;
		border-radius: 50%;
		background:
			radial-gradient(circle at 52% 48%, #fff 8%, rgba(255, 255, 255, 0.7) 18%, transparent 42%),
			conic-gradient(#2f9c80, #35b59a 15%, #3aa5e0 28%, #1b5fb8 45%, #2a4fa0 55%, #a04fc4 65%, #e03f86 78%, #7d4a70 92%, #2f9c80);
	}

	.clock {
		display: flex;
		padding-bottom: 2px;
		letter-spacing: 0.45px;
		white-space: nowrap;
	}

	.clock span + span {
		margin-left: 15px;
	}

	.clock span:last-child {
		margin-left: 6px;
	}

	.seam {
		flex: none;
		height: 4px;
		background:
			linear-gradient(90deg, #d8d6d8 500px, #262722 504px) 0 2px / 100% 2px no-repeat,
			linear-gradient(90deg, #aaa49f, #98968c);
	}

	.window {
		position: relative;
		flex: none;
		width: 3022px;
		height: 1784px;
		border-radius: 20px;
		background: #d5d5d5;
		box-shadow: inset 0 2px 0 -1px #efefef;
	}

	.dropdown {
		position: absolute;
		left: 76px;
		top: 76px;
		box-sizing: border-box;
		width: 356px;
		height: 328px;
		margin: 0;
		padding: 10px 28px;
		border-radius: 12px;
		background: #e6e6e6;
		box-shadow: 0 0 0 1px rgba(0, 0, 0, 0.22), 0 14px 36px rgba(0, 0, 0, 0.25);
		color: #232323;
		letter-spacing: -0.22px;
		list-style: none;
	}

	.entry {
		display: flex;
		justify-content: space-between;
		align-items: center;
		height: 44px;
	}

	.disabled {
		color: #ababab;
	}

	.shortcut {
		display: flex;
		align-items: center;
		gap: 5px;
		margin-right: -2px;
		color: #adadad;
	}

	.shortcut svg {
		width: 22px;
		height: 22px;
		fill: none;
		stroke: currentColor;
		stroke-width: 2;
	}

	kbd {
		width: 20px;
		margin-left: 1px;
		font-family: inherit;
	}

	.rule {
		height: 2px;
		margin: 10px 0;
		background: #cdcdcd;
	}

	.dock {
		position: relative;
		display: flex;
		flex: none;
		box-sizing: border-box;
		width: 2915px;
		height: 90px;
		margin: 2px 0 0 54px;
		padding: 14px 0 0 14px;
		border-radius: 27px;
		background: linear-gradient(90deg, #886c5d, #79695a 9%, #6e6e58 14%, #68754f 21%, #68754f 28%, #786a57 38%, #7b6658 44%, #74685a 51%, #7f6f56 62%, #7a6e57 70%, #65675b 76%, #66665b 80%, #8c7353 88%, #8c7257 93%, #866b5f);
		box-shadow: inset 0 0 0 2px rgba(255, 255, 255, 0.18), 0 0 70px rgba(0, 0, 0, 0.26);
	}

	.defs {
		position: absolute;
	}

	.app {
		width: 56px;
		margin-left: 16px;
	}

	.app > svg {
		display: block;
		width: 56px;
		height: 56px;
		overflow: visible;
		filter: drop-shadow(0 1px 1px rgba(0, 0, 0, 0.2));
	}

	.wide {
		margin-left: 18px;
	}

	.after {
		margin-left: 22px;
	}

	.defs + .app {
		margin-left: 0;
	}

	.dot {
		display: block;
		width: 8px;
		height: 8px;
		margin: 7.5px auto 0;
		border-radius: 50%;
		background: #000;
	}

	.divider {
		width: 2px;
		height: 66px;
		margin: -2px 0 0 26px;
		background: #5d4526;
	}

	.petals rect {
		mix-blend-mode: multiply;
		opacity: 0.88;
	}

	text {
		text-anchor: middle;
	}

	.month {
		fill: #fff;
		font-size: 11px;
		font-weight: 600;
	}

	.day {
		fill: #26262a;
		font-size: 34px;
		font-weight: 300;
		letter-spacing: -1px;
	}

	.badge {
		fill: #fff;
		font-size: 13px;
	}

	.office {
		fill: #fff;
		font-family: "Open Sans", sans-serif;
		font-size: 16px;
		font-weight: 700;
	}

	.adobe,
	.zoom,
	.sbsar {
		text-anchor: start;
	}

	.adobe {
		font-family: "Open Sans", "Noto Sans", sans-serif;
		font-size: 33px;
		font-weight: 700;
	}

	.zoom {
		fill: #fff;
		font-size: 15px;
		font-weight: 500;
	}

	.sbsar {
		fill: #fff;
		font-family: "Open Sans", "Noto Sans", sans-serif;
		font-size: 13px;
		font-weight: 700;
	}
</style>
